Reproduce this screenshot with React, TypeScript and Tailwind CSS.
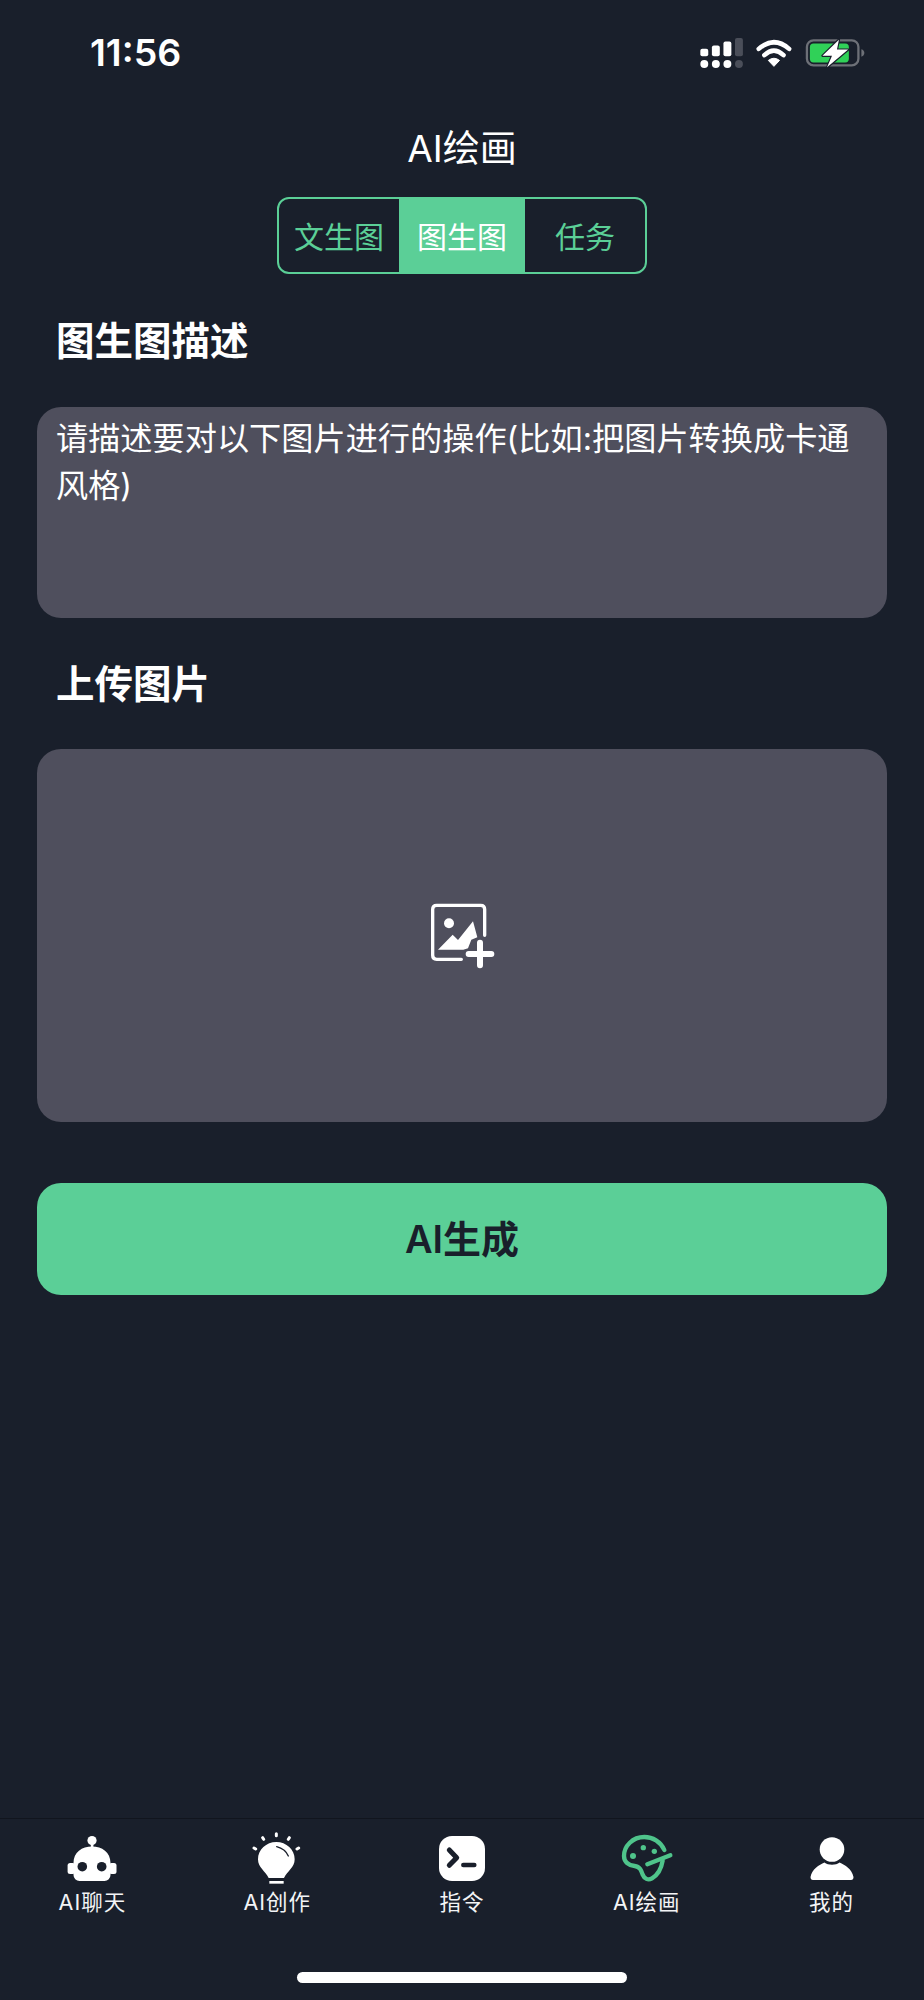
const font = { fontFamily: '"Inter", "Noto Sans CJK SC", sans-serif' };

function StatusIcons() {
  const dim = "#4a4e59";
  return (
    <svg width="173" height="33" viewBox="170 45 520 100" fill="none">
      <rect x="178" y="84" width="24" height="22" rx="6" fill="#fff" />
      <rect x="213" y="74" width="24" height="32" rx="6" fill="#fff" />
      <rect x="248" y="62" width="24" height="44" rx="6" fill="#fff" />
      <rect x="283" y="51" width="24" height="55" rx="6" fill={dim} />
      <circle cx="190" cy="130" r="12" fill="#fff" />
      <circle cx="225" cy="130" r="12" fill="#fff" />
      <circle cx="260" cy="130" r="12" fill="#fff" />
      <circle cx="295" cy="130" r="12" fill={dim} />
      <path d="M355 84 Q401 44 447 84" stroke="#fff" strokeWidth="14" strokeLinecap="round" />
      <path d="M372 103 Q401 76 430 103" stroke="#fff" strokeWidth="14" strokeLinecap="round" />
      <path d="M401 137 L384 119 Q401 106 418 119 Z" fill="#fff" stroke="#fff" strokeWidth="3" strokeLinejoin="round" />
      <rect x="501" y="58" width="156" height="76" rx="20" stroke="#6d7077" strokeWidth="7" />
      <rect x="510" y="68" width="118" height="57" rx="11" fill="#30d158" />
      <path d="M666 85 Q675 88 675 96 Q675 105 666 108 Z" fill="#6d7077" />
      <path d="M598 56 L548 105 L577 105 L562 140 L626 86 L592 86 Z" fill="#fff" stroke="#191f2b" strokeWidth="7" strokeLinejoin="round" paintOrder="stroke" />
    </svg>
  );
}

function RobotIcon() {
  return (
    <svg width="66" height="66" viewBox="0 0 66 66" fill="#fff">
      <circle cx="33" cy="14.5" r="4.6" />
      <rect x="31.8" y="15" width="2.6" height="7" />
      <path d="M14.5 37 C14.5 26 23 20.5 33 20.5 C43 20.5 51.5 26 51.5 37 V49 a6 6 0 0 1 -6 6 H20.5 a6 6 0 0 1 -6 -6 Z" />
      <rect x="8.6" y="37" width="7.5" height="11" rx="2.5" />
      <rect x="50" y="37" width="7.5" height="11" rx="2.5" />
      <circle cx="23.3" cy="40.7" r="4.8" fill="#191f2b" />
      <circle cx="42.7" cy="40.7" r="4.8" fill="#191f2b" />
    </svg>
  );
}

function BulbIcon() {
  return (
    <svg width="66" height="66" viewBox="0 0 198 198" fill="none">
      <path d="M97 48 C127 48 152 71 152 100 C152 125 130 135 120 156 H74 C64 135 42 125 42 100 C42 71 67 48 97 48 Z" fill="#fff" />
      <path d="M98 62 C113 66 127 76 133 90" stroke="#191f2b" strokeWidth="4" strokeLinecap="round" />
      <path d="M76 169 H119" stroke="#fff" strokeWidth="8" />
      <path d="M97 23 V29 M56 35 L59 40 M136 35 L133 40 M30 66 L35 69 M164 66 L159 69" stroke="#fff" strokeWidth="9" strokeLinecap="round" />
    </svg>
  );
}

function TerminalIcon() {
  return (
    <svg width="66" height="66" viewBox="0 0 66 66" fill="none">
      <rect x="10" y="10" width="46" height="45" rx="13" fill="#fff" />
      <path d="M20.3 24 L27.7 31.7 L20.3 39.3" stroke="#191f2b" strokeWidth="5" strokeLinecap="round" strokeLinejoin="round" />
      <path d="M34.3 39 H45.3" stroke="#191f2b" strokeWidth="4.5" strokeLinecap="round" />
    </svg>
  );
}

function PaletteIcon() {
  return (
    <svg width="66" height="66" viewBox="6 0 198 198" fill="none">
      <path
        d="M157 72 C146 47 122 33 97 33 C62 33 36 60 36 90 C36 108 50 118 68 120 C84 122 88 134 92 146 C97 158 108 164 120 157 C136 148 148 128 152 104"
        stroke="#4fc48b"
        strokeWidth="13"
        strokeLinecap="round"
      />
      <path d="M106 115 L175 88" stroke="#4fc48b" strokeWidth="13" strokeLinecap="round" />
      <circle cx="63" cy="90" r="9" fill="#4fc48b" />
      <circle cx="94" cy="65" r="8" fill="#4fc48b" />
      <circle cx="127" cy="76" r="8" fill="#4fc48b" />
    </svg>
  );
}

function PersonIcon() {
  return (
    <svg width="66" height="66" viewBox="0 0 66 66" fill="#fff">
      <circle cx="33" cy="23.5" r="12.3" />
      <path d="M11.5 51 C13 43 20 39 25.5 36.5 C29 39.5 37 39.5 40.5 36.5 C46 39 53 43 54.5 51 Q54.5 54 52 54 H14 Q11.5 54 11.5 51 Z" />
    </svg>
  );
}

function UploadIcon() {
  return (
    <svg width="120" height="100" viewBox="0 0 360 300" fill="none">
      <path d="M254 166 V88 Q254 76 242 76 H110 Q98 76 98 88 V226 Q98 238 110 238 H184" stroke="#fff" strokeWidth="10" strokeLinecap="round" />
      <circle cx="147" cy="130" r="15" fill="#fff" />
      <path d="M114 209 L158 164 L174 180 L219 124 L232 172 L214 179 L204 205 L190 209 Z" fill="#fff" />
      <path d="M240 188 V256 M206 222 H274" stroke="#fff" strokeWidth="18" strokeLinecap="round" />
    </svg>
  );
}

const tabs = [
  { label: "AI聊天", icon: <RobotIcon /> },
  { label: "AI创作", icon: <BulbIcon /> },
  { label: "指令", icon: <TerminalIcon /> },
  { label: "AI绘画", icon: <PaletteIcon /> },
  { label: "我的", icon: <PersonIcon /> },
];

export default function App() {
  return (
    <div style={font} className="flex h-[2000px] w-[924px] flex-col bg-[#191f2b] text-white">
      <div className="flex h-[104px] items-center justify-between pl-[90px] pr-[54px]">
        <span className="pt-px text-[37.5px] font-semibold leading-none">11:56</span>
        <StatusIcons />
      </div>

      <h1 className="flex h-[89px] items-center justify-center text-[37px] font-normal">AI绘画</h1>

      <div className="mx-auto mt-1 flex h-[77px] w-[370px] overflow-hidden rounded-xl border-2 border-[#5bcf97] text-[30px] text-[#5bcf97]">
        <div className="flex w-[120px] items-center justify-center pt-1">文生图</div>
        <div className="flex w-[126px] items-center justify-center bg-[#5bcf97] pt-1 text-white">图生图</div>
        <div className="flex w-[120px] items-center justify-center pt-1">任务</div>
      </div>

      <h2 className="mt-[41px] pl-[56px] text-[38.5px] font-semibold leading-[53px]">图生图描述</h2>
      <div className="mx-[37px] mt-[39px] h-[211px] rounded-3xl bg-[#4f4f5d] pl-[19px] pr-4 pt-2 text-[32.2px] leading-[47px]">
        请描述要对以下图片进行的操作(比如:把图片转换成卡通风格)
      </div>

      <h2 className="mt-[40px] pl-[56px] text-[38.5px] font-semibold leading-[53px]">上传图片</h2>
      <div className="mx-[37px] mt-[38px] flex h-[373px] items-center justify-center rounded-3xl bg-[#4f4f5d] pb-3 pr-1">
        <UploadIcon />
      </div>

      <div className="mx-[37px] mt-[61px] flex h-[112px] items-center justify-center rounded-3xl bg-[#5bcf97] text-[38px] font-semibold text-[#191f2b]">
        AI生成
      </div>

      <div className="mt-auto flex h-[182px] flex-col border-t border-[#11151e]">
        <div className="grid grid-cols-5 pt-[7px]">
          {tabs.map((t) => (
            <div key={t.label} className="flex flex-col items-center">
              {t.icon}
              <span className="-mt-px text-[21.5px] leading-[22px] tracking-[1px] text-[#f3f4f6]">{t.label}</span>
            </div>
          ))}
        </div>
        <div className="mx-auto mb-[17px] mt-auto h-[11px] w-[330px] rounded-full bg-white" />
      </div>
    </div>
  );
}
